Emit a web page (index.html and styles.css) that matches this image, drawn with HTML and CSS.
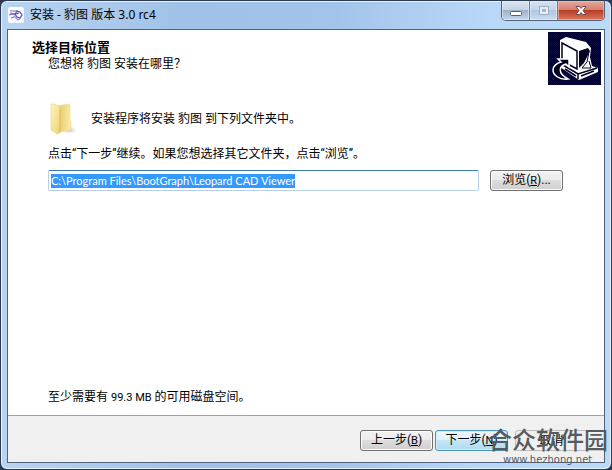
FILE: index.html
```html
<!DOCTYPE html>
<html lang="zh-CN">
<head>
<meta charset="utf-8">
<title>安装 - 豹图 版本 3.0 rc4</title>
<link rel="stylesheet" href="styles.css">
</head>
<body>
<div class="window">
  <header class="titlebar">
    <svg class="app-icon" width="16" height="16" viewBox="0 0 16 16" aria-hidden="true">
      <rect width="16" height="16" rx="2" fill="#fbfaff"/>
      <g fill="none" stroke="#7a70c4" stroke-width="1.200">
        <path d="M2 4h7l-2 3-5-1M1 8l4-1 2 1M3 11l3-1"/>
        <path d="M8 4l4 1 2 3-2 3-3-1-2-3 4-1" stroke="#5048a8"/>
        <path d="M6 9l4 4 3-2" stroke="#938bdb"/>
      </g>
    </svg>
    <h1 class="caption">安装 - 豹图 版本 3.0 rc4</h1>
    <div class="controls">
      <button class="control" type="button" aria-label="最小化">
        <svg width="14" height="12" viewBox="0 0 14 12"><rect x="1.5" y="6.5" width="11" height="4" rx="1" fill="#fff" stroke="#53606f"/></svg>
      </button>
      <button class="control" type="button" aria-label="最大化" disabled>
        <svg width="14" height="12" viewBox="0 0 14 12"><path d="M2.500 1.500h9v8h-9z M5.500 4.500h3v2h-3z" fill="#e6eef7" fill-rule="evenodd" stroke="#9cabbf"/></svg>
      </button>
      <button class="control control-close" type="button" aria-label="关闭">
        <svg width="14" height="12" viewBox="0 0 14 12"><path d="M2 1.500h3.500L7 3.500l1.500-2H12L9 5.500l3 4H8.500L7 7.500l-1.500 2H2l3-4z" fill="#fff" stroke="#6b4b50" stroke-linejoin="round"/></svg>
      </button>
    </div>
  </header>

  <main class="client">
    <section class="page">
      <div class="heading">
        <div class="heading-text">
          <h2>选择目标位置</h2>
          <p>您想将 豹图 安装在哪里？</p>
        </div>
        <svg class="setup-art" width="53" height="53" viewBox="0 0 53 53" aria-hidden="true">
          <defs>
            <pattern id="weave" width="2" height="2" patternUnits="userSpaceOnUse"><path d="M0 0h1v1H0zM1 1h1v1H1z" fill="#0b0b3e"/></pattern>
          </defs>
          <rect width="53" height="53" fill="#00001c"/>
          <rect width="53" height="53" fill="url(#weave)"/>
          <path d="M12 8l6-3 20 5 5 6-1 9 2 9 6 2v4L31 48 12 35V10z" fill="#fff"/>
          <path d="M14 11l15 8v18l-15-8z" fill="#fff" stroke="#000020" stroke-width="1.500"/>
          <path d="M31 19l9-3 2 3-6 12-5 5z" fill="#000020"/>
          <path d="M41 20l-2 10-5 6h9l-2-7" fill="#fff" stroke="#000020" stroke-width="1"/>
          <path d="M15 33l15 9 19-6M30 42v5M17 37l11 7M33 44l13-5" fill="none" stroke="#000020" stroke-width="1.500"/>
          <path d="M10 27h11v8l-3-3c-7 2-9 9 2 15-9 1-15-4-15-9 0-4 4-7 8-8z" fill="#000020" stroke="#fff" stroke-width="1.500"/>
        </svg>
      </div>

      <div class="intro">
        <svg width="32" height="34" viewBox="0 0 32 34" aria-hidden="true">
          <defs>
            <linearGradient id="front" x2="1" y2="1"><stop offset="0" stop-color="#fff3b8"/><stop offset="1" stop-color="#efd476"/></linearGradient>
            <linearGradient id="back"><stop offset="0" stop-color="#e3c566"/><stop offset="1" stop-color="#fbeda8"/></linearGradient>
            <radialGradient id="shade"><stop offset="0" stop-color="#888" stop-opacity=".6"/><stop offset="1" stop-color="#bbb" stop-opacity="0"/></radialGradient>
          </defs>
          <ellipse cx="21" cy="28" rx="8" ry="4" fill="url(#shade)"/>
          <path d="M9 4l11-2 2 1v14l1 2v9l-11 2z" fill="url(#back)" stroke="#ecd88e" stroke-width=".6"/>
          <path d="M3 2h3l6 3v26l-3 1-6-4z" fill="url(#front)" stroke="#e6d080" stroke-width=".6"/>
          <path d="M12 6v24" stroke="#d5b654" stroke-width=".8"/>
        </svg>
        <p>安装程序将安装 豹图 到下列文件夹中。</p>
      </div>

      <label class="hint" for="folder">点击“下一步”继续。如果您想选择其它文件夹，点击“浏览”。</label>
      <div class="picker">
        <div class="field">
          <input id="folder" type="text" value="C:\Program Files\BootGraph\Leopard CAD Viewer" autofocus>
        </div>
        <button class="button" type="button">浏览(<u>R</u>)...</button>
      </div>

      <p class="space">至少需要有 <span class="size">99.3 MB</span> 的可用磁盘空间。</p>
    </section>

    <footer class="actions">
      <button class="button" type="button">上一步(<u>B</u>)</button>
      <button class="button button-default" type="button">下一步(<u>N</u>)</button>
      <button class="button button-cancel" type="button">取消</button>
    </footer>
  </main>

  <div class="watermark">
    <span class="mark-name">合众软件园</span>
    <span class="mark-site">www.hezhong.net</span>
  </div>
</div>
<script src="script.js"></script>
</body>
</html>
```
FILE: styles.css
```css
* {
  box-sizing: border-box;
}

body {
  margin: 0;
  background: #2b3a50;
  color: #000;
  font: 12px/16px Roboto, "Noto Sans CJK SC", sans-serif;
}

h1,
h2,
p {
  margin: 0;
  font-size: 12px;
  font-weight: 400;
}

.window {
  position: relative;
  display: flex;
  flex-direction: column;
  min-height: 100vh;
  padding: 0 6px 6px;
  border: 1px solid #2c3b50;
  border-radius: 7px;
  background: linear-gradient(90deg, #b9d4f0, #a0c1e8 30%, #a3c4ea 55%, #b9d8f8 80%, #bcdaf8);
  box-shadow: inset 0 0 0 1px #e4f2ff;
}

.titlebar {
  display: flex;
  align-items: center;
  gap: 6px;
  height: 28px;
  padding-left: 1px;
}

.caption {
  flex: 1;
  font-family: "Noto Sans", "Noto Sans CJK SC", sans-serif;
}

.controls {
  display: flex;
  align-self: flex-start;
  height: 20px;
  overflow: hidden;
  border: 1px solid #53647b;
  border-top: 0;
  border-radius: 0 0 5px 5px;
}

.control {
  display: flex;
  align-items: center;
  justify-content: center;
  width: 28px;
  padding: 0;
  border: 0;
  border-right: 1px solid #6d7f96;
  background: linear-gradient(#dce6f1, #c3d2e3 48%, #9db0c7 50%, #c5d7eb);
  box-shadow: inset 0 0 0 1px #e9f2fb99;
}

.control:disabled {
  background: linear-gradient(#d4e3f4, #c2d5ea 48%, #b0c6e0 50%, #c9dcf2);
}

.control-close {
  width: 46px;
  border-right: 0;
  background: linear-gradient(#e6a99c, #d57d6c 48%, #b93c27 50%, #d9795c);
  box-shadow: inset 0 0 0 1px #f2c5b899;
}

.client {
  display: flex;
  flex: 1;
  flex-direction: column;
  border: 1px solid #50637c;
  background: #fff;
}

.page {
  display: flex;
  flex: 1;
  flex-direction: column;
  padding: 2px 3px 9px 40px;
}

.heading {
  display: flex;
  justify-content: space-between;
  margin-left: -16px;
}

.heading-text {
  padding-top: 8px;
}

.heading h2 {
  font-size: 13px;
  font-weight: 700;
}

.heading p {
  padding-left: 16px;
}

.intro {
  display: flex;
  align-items: center;
  gap: 11px;
  margin-top: 17px;
}

.hint {
  margin-top: 10px;
}

.picker {
  display: flex;
  gap: 11px;
  margin: 8px 38px 0 0;
}

.field {
  display: flex;
  flex: 1;
  align-items: center;
  height: 21px;
  padding: 0 2px;
  border: 1px solid #b5cfe7;
  border-top-color: #3d7bad;
  border-radius: 2px;
}

.field input {
  flex: 1;
  min-width: 0;
  height: 14px;
  padding: 0;
  border: 0;
  outline: 0;
  font: 11px/14px Lato, "Noto Sans CJK SC", sans-serif;
}

.field input::selection {
  background: #3399ff;
  color: #fff;
}

.space {
  margin-top: auto;
}

.size {
  font-size: 11px;
}

.actions {
  display: flex;
  gap: 2px;
  align-items: flex-start;
  justify-content: flex-end;
  height: 47px;
  padding: 14px 16px 0;
  border-top: 1px solid #a0a0a0;
  background: #f0f0f0;
}

.button {
  width: 73px;
  height: 21px;
  padding: 0;
  border: 1px solid #707070;
  border-radius: 3px;
  background: linear-gradient(#f2f2f2, #ebebeb 48%, #dddddd 50%, #cfcfcf);
  box-shadow: inset 0 0 0 1px #fcfcfc;
  color: #000;
  font: 12px/16px Roboto, "Noto Sans CJK SC", sans-serif;
}

.button u {
  font-size: 11px;
}

.button-default {
  border-color: #4a94bf;
  background: linear-gradient(#edf7fd, #dff1fb 48%, #c4e5f6 50%, #b0daf0);
  box-shadow: inset 0 0 0 1px #c9effc;
}

.button-cancel {
  margin-left: 5px;
  border-color: #bcbcbc;
  background: #f0f0f0;
  box-shadow: none;
}

.watermark {
  position: absolute;
  right: 3px;
  bottom: 3px;
  display: flex;
  flex-direction: column;
  width: 120px;
  color: #555b60;
  pointer-events: none;
}

.mark-name {
  font: 500 24px/28px "Noto Sans CJK SC", sans-serif;
  white-space: nowrap;
}

.mark-site {
  padding: 1px 0 0 15px;
  font: 10px/12px "DejaVu Sans", sans-serif;
}
```
FILE: script.js
```js
const folder = document.getElementById("folder");
folder.focus();
folder.select();
```
